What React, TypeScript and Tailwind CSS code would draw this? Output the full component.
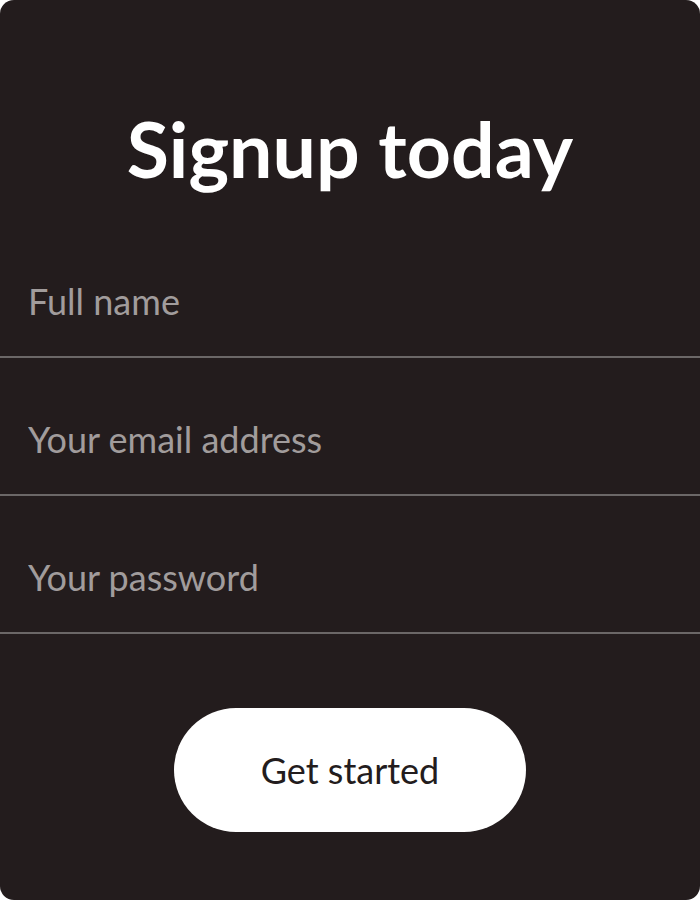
const fields = [
  { type: 'text', placeholder: 'Full name' },
  { type: 'email', placeholder: 'Your email address' },
  { type: 'password', placeholder: 'Your password' },
]

export default function App() {
  return (
    <div className="w-[700px] h-[900px] bg-white font-['Lato','Liberation_Sans',sans-serif]">
      <div className="flex h-full flex-col rounded-[14px] bg-[#231c1d]">
        <h1 className="pt-[98px] text-center text-[77px] font-bold leading-[100px] text-white">
          Signup today
        </h1>

        <form className="mt-[22px] flex flex-col" onSubmit={(e) => e.preventDefault()}>
          {fields.map((field) => (
            <input
              key={field.placeholder}
              type={field.type}
              placeholder={field.placeholder}
              className="h-[138px] w-full border-b-2 border-[#6b6767] bg-transparent px-[28px] pt-[26px] text-[36px] text-white outline-none placeholder:text-[#a19c9c]"
            />
          ))}

          <div className="mt-[74px] flex justify-center">
            <button
              type="submit"
              className="h-[124px] w-[352px] rounded-full bg-white text-[36px] text-[#231c1d]"
            >
              Get started
            </button>
          </div>
        </form>
      </div>
    </div>
  )
}
